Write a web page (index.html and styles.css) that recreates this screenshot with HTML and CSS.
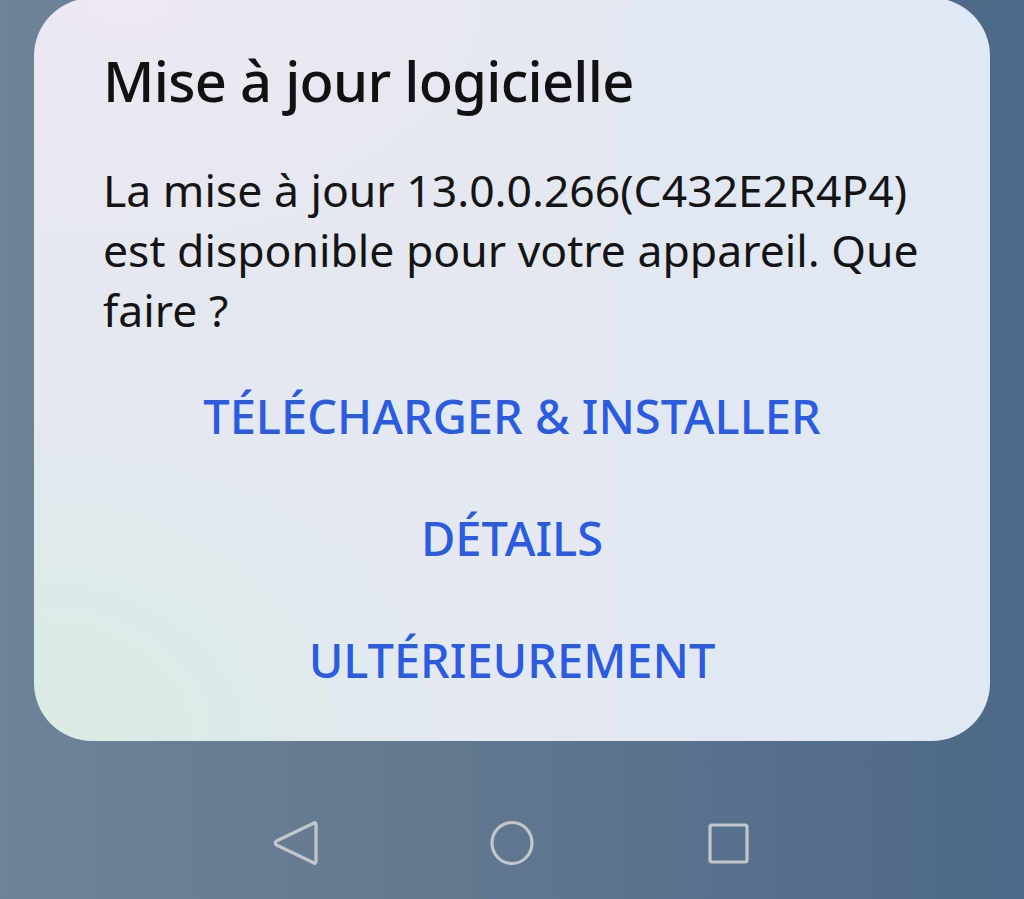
FILE: index.html
```html
<!DOCTYPE html>
<html lang="fr">
<head>
<meta charset="utf-8">
<title>Mise à jour logicielle</title>
<link rel="stylesheet" href="styles.css">
</head>
<body>
<div class="screen">
  <div class="dialog">
    <h1 class="title">Mise à jour logicielle</h1>
    <p class="message">La mise à jour 13.0.0.266(C432E2R4P4) est disponible pour votre appareil. Que faire ?</p>
    <div class="actions">
      <button class="action">TÉLÉCHARGER &amp; INSTALLER</button>
      <button class="action">DÉTAILS</button>
      <button class="action">ULTÉRIEUREMENT</button>
    </div>
  </div>
  <nav class="navbar">
    <svg class="nav-icon" width="60" height="60" viewBox="0 0 60 60"><path d="M50 12 L50 48 Q50 52 47 49.5 L10.5 32 Q8 30 10.5 28 L47 10.5 Q50 8 50 12 Z" fill="none" stroke="#c3c6cb" stroke-width="3.2" stroke-linejoin="round"/></svg>
    <svg class="nav-icon" width="60" height="60" viewBox="0 0 60 60"><ellipse cx="30" cy="30" rx="20" ry="20.5" fill="none" stroke="#c3c6cb" stroke-width="3.2"/></svg>
    <svg class="nav-icon" width="60" height="60" viewBox="0 0 60 60"><rect x="11" y="12" width="37" height="37" rx="2" fill="none" stroke="#c3c6cb" stroke-width="3.2"/></svg>
  </nav>
</div>
</body>
</html>
```
FILE: styles.css
```css
html, body {
  margin: 0;
  padding: 0;
}
body {
  width: 1024px;
  height: 899px;
  overflow: hidden;
  font-family: "Noto Sans", "Open Sans", sans-serif;
}
.screen {
  width: 1024px;
  height: 899px;
  background: linear-gradient(90deg, #6d839a 0%, #61788f 45%, #4d6888 100%);
  display: flex;
  flex-direction: column;
  align-items: center;
}
.dialog {
  box-sizing: border-box;
  width: 956px;
  height: 743px;
  margin-top: -2px;
  border-radius: 58px;
  padding: 44px 69px 0 69px;
  background:
    radial-gradient(ellipse 420px 320px at 0% 100%, rgba(216, 236, 226, 0.95), rgba(216, 236, 226, 0) 100%),
    radial-gradient(ellipse 520px 320px at 10% 0%, rgba(238, 232, 242, 0.95), rgba(238, 232, 242, 0) 100%),
    linear-gradient(90deg, #e4e8f1 0%, #e3e8f1 55%, #dfe8f5 100%);
  color: #111;
}
.title {
  margin: 0;
  font-weight: 500;
  font-size: 56px;
  line-height: 76px;
  letter-spacing: -0.7px;
}
.message {
  margin: 42px 0 0 0;
  font-size: 44.5px;
  line-height: 60px;
  font-weight: 400;
  color: #141414;
}
.actions {
  margin-top: 15px;
  display: flex;
  flex-direction: column;
  align-items: center;
}
.action {
  border: 0;
  background: transparent;
  font-family: inherit;
  color: #2a5be0;
  font-size: 47px;
  font-weight: 500;
  height: 122px;
  padding: 0;
  line-height: 122px;
}
.navbar {
  margin-top: 72px;
  width: 493px;
  display: flex;
  justify-content: space-between;
}
.nav-icon {
  display: block;
}
```
